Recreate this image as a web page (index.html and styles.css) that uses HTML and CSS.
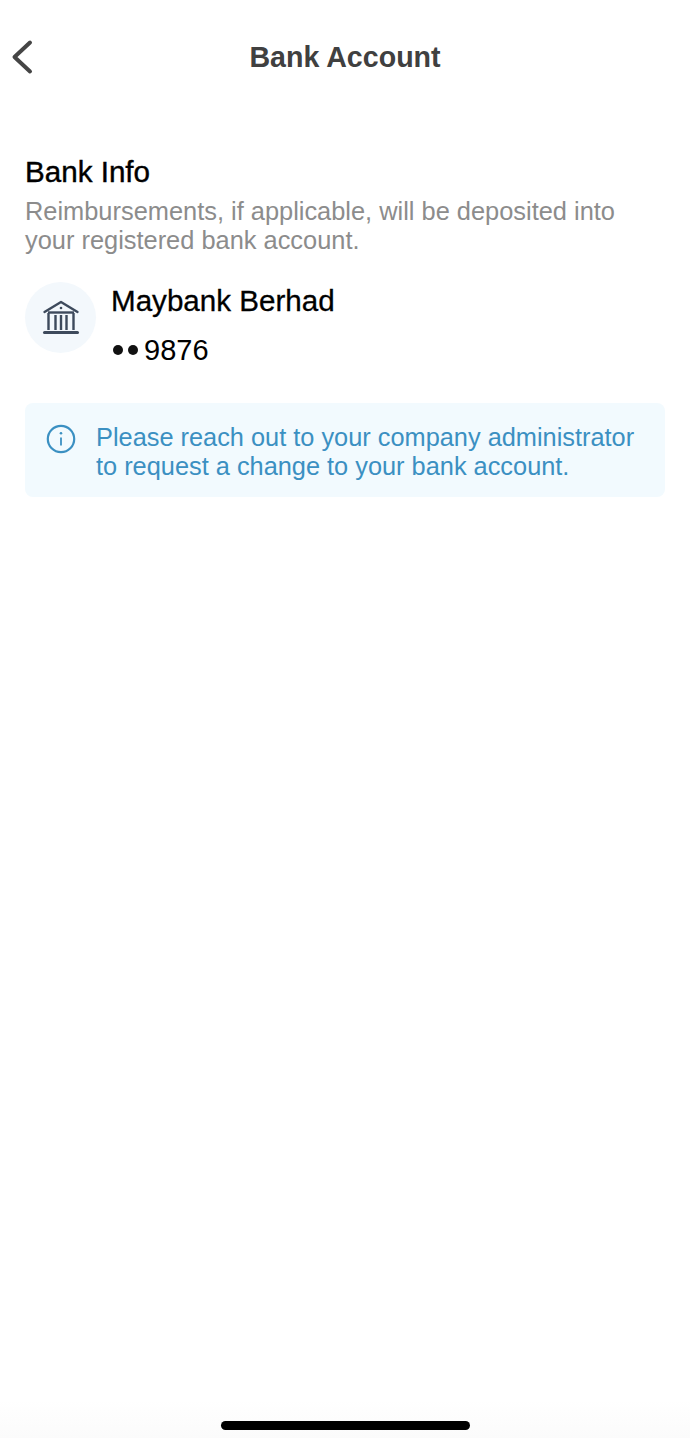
FILE: index.html
```html
<!DOCTYPE html>
<html lang="en">
<head>
  <meta charset="UTF-8" />
  <title>Bank Account</title>
  <link rel="stylesheet" href="styles.css">
</head>
<body>

<div class="screen">
  <header class="topbar">
    <svg class="back-icon" width="24" height="36" viewBox="0 0 24 36" fill="none">
      <path d="M20 3.500 L4.500 18 L20 32.500" stroke="#454545" stroke-width="4" stroke-linecap="round" stroke-linejoin="round" />
    </svg>
    <h1 class="topbar-title">Bank Account</h1>
  </header>

  <main class="content">
    <h2 class="section-title">Bank Info</h2>
    <p class="section-desc">Reimbursements, if applicable, will be deposited into your registered bank account.</p>

    <div class="bank-row">
      <div class="bank-icon">
        <svg width="38" height="38" viewBox="0 0 38 38" fill="none" stroke="#3d4a5c" stroke-width="2.400">
          <path d="M2.500 13 L19 3 L35.500 13" stroke-linecap="round" stroke-linejoin="round" />
          <path d="M6 13.500 H32" />
          <circle cx="19" cy="9" r="1.300" fill="#3d4a5c" stroke="none" />
          <path d="M6.500 14 V31 M13.500 16 V31 M19 16 V31 M24.500 16 V31 M31.500 14 V31" />
          <path d="M2.500 33.500 H35.500" stroke-width="3" stroke-linecap="round" />
        </svg>
      </div>
      <div class="bank-text">
        <div class="bank-name">Maybank Berhad</div>
        <div class="bank-number"><span class="dot"></span><span class="dot"></span>9876</div>
      </div>
    </div>

    <div class="notice">
      <svg class="notice-icon" width="30" height="30" viewBox="0 0 30 30" fill="none" stroke="#3b90c2">
        <circle cx="15" cy="15" r="13.200" stroke-width="2.200" />
        <path d="M15 13.500 V21.500" stroke-width="1.800" />
        <circle cx="15" cy="9.300" r="1.300" fill="#3b90c2" stroke="none" />
      </svg>
      <p class="notice-text">Please reach out to your company administrator to request a change to your bank account.</p>
    </div>
  </main>

  <div class="home-indicator"></div>
</div>

</body>
</html>
```

FILE: styles.css
```css
* { box-sizing: border-box; }

body {
  margin: 0;
  background: #fff;
  font-family: "Liberation Sans", Arial, sans-serif;
}

.screen {
  width: 690px;
  height: 1438px;
  display: flex;
  flex-direction: column;
  background: linear-gradient(to bottom, #fff 1400px, #fbfbfb 1438px);
}

.topbar {
  position: relative;
  height: 78px;
  padding-top: 37px;
  flex-shrink: 0;
}

.back-icon {
  position: absolute;
  left: 10px;
  top: 39px;
}

.topbar-title {
  margin: 0;
  text-align: center;
  font-size: 28.600px;
  line-height: 41px;
  font-weight: 700;
  color: #404040;
}

.content {
  flex: 1;
  padding: 75px 25px 0;
}

.section-title {
  margin: 0;
  font-size: 29.600px;
  line-height: 38px;
  font-weight: 400;
  color: #000;
  -webkit-text-stroke: 0.4px #000;
}

.section-desc {
  margin: 6px 0 0;
  font-size: 25.400px;
  line-height: 29px;
  color: #8c8c8c;
}

.bank-row {
  display: flex;
  gap: 15px;
  margin-top: 26px;
}

.bank-icon {
  width: 71px;
  height: 71px;
  margin-top: 1px;
  border-radius: 50%;
  background: #f3f8fc;
  display: flex;
  align-items: center;
  justify-content: center;
  flex-shrink: 0;
}

.bank-name {
  font-size: 29.600px;
  line-height: 38px;
  margin-top: 1px;
  color: #000;
  -webkit-text-stroke: 0.3px #000;
}

.bank-number {
  display: flex;
  align-items: center;
  margin-top: 11px;
  font-size: 29px;
  line-height: 38px;
  color: #000;
}

.dot {
  width: 10px;
  height: 10px;
  margin-right: 5px;
  margin-left: 2px;
  border-radius: 50%;
  background: #111;
}

.dot + .dot { margin-left: 0; margin-right: 6px; }

.notice {
  display: flex;
  gap: 20px;
  margin-top: 34px;
  width: 640px;
  height: 94px;
  padding: 20px 20px 0 21px;
  border-radius: 8px;
  background: #f2fafe;
}

.notice-icon {
  margin-top: 1px;
  flex-shrink: 0;
}

.notice-text {
  margin: 0;
  font-size: 25.350px;
  line-height: 29px;
  color: #3b90c2;
}

.home-indicator {
  width: 249px;
  height: 9px;
  margin: 0 auto 8px;
  border-radius: 5px;
  background: #000;
  flex-shrink: 0;
}
```
